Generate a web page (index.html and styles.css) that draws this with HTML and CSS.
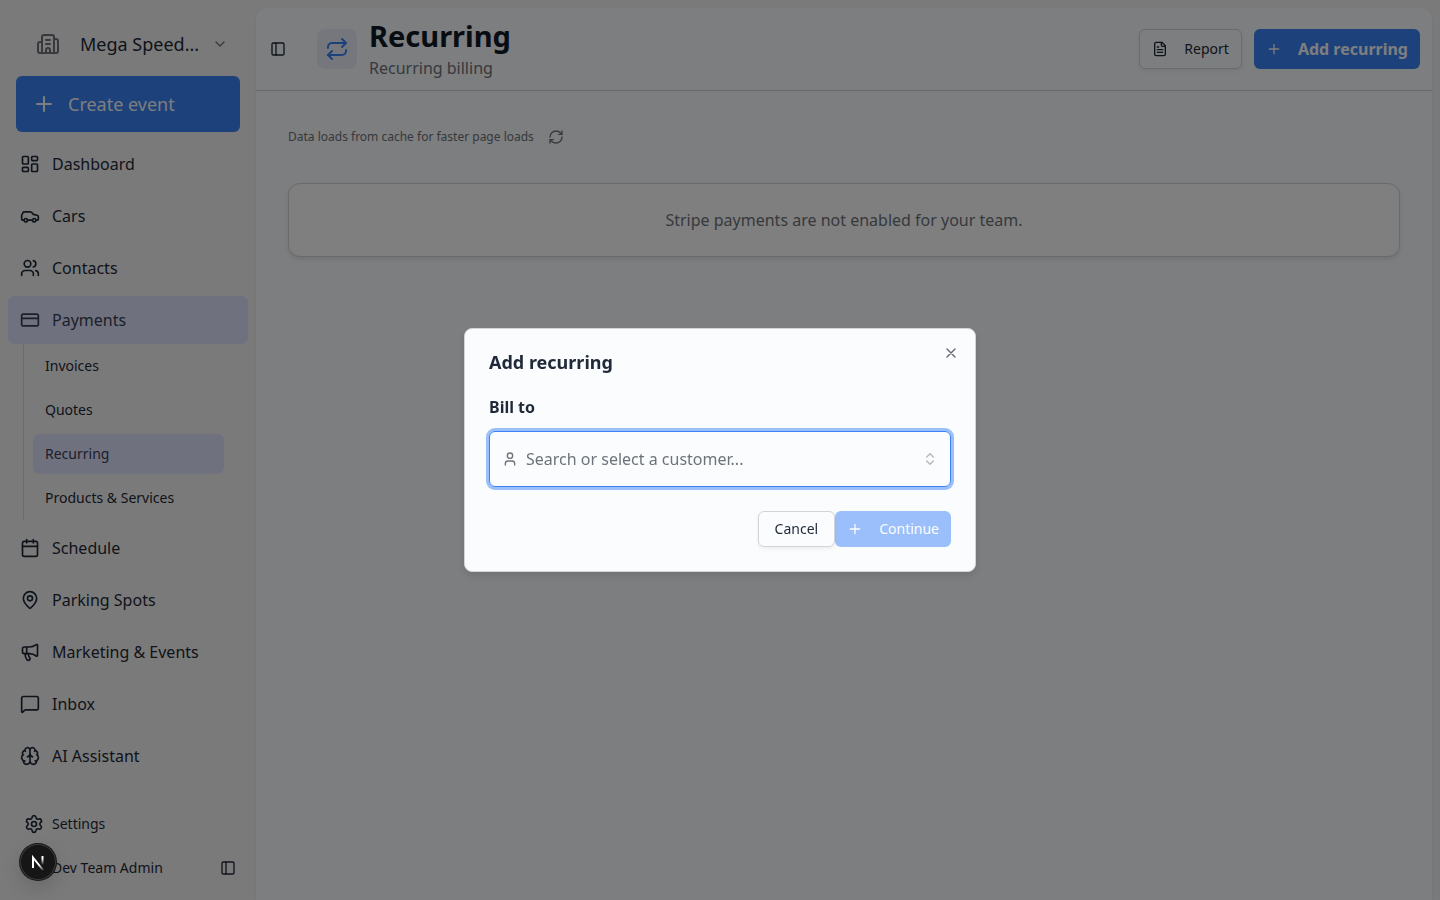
FILE: index.html
```html
<!DOCTYPE html>
<html lang="en">
<head>
<meta charset="utf-8">
<meta name="viewport" content="width=device-width, initial-scale=1">
<title>Recurring</title>
<link rel="stylesheet" href="styles.css">
</head>
<body>
<svg class="sprite" aria-hidden="true">
  <symbol id="i-building" viewBox="0 0 24 24"><path d="M10 12h4M10 8h4M14 21v-3a2 2 0 0 0-4 0v3M6 10H4a2 2 0 0 0-2 2v7a2 2 0 0 0 2 2h16a2 2 0 0 0 2-2V9a2 2 0 0 0-2-2h-2M6 21V5a2 2 0 0 1 2-2h8a2 2 0 0 1 2 2v16"/></symbol>
  <symbol id="i-chevron" viewBox="0 0 24 24"><path d="m6 9 6 6 6-6"/></symbol>
  <symbol id="i-plus" viewBox="0 0 24 24"><path d="M5 12h14M12 5v14"/></symbol>
  <symbol id="i-dashboard" viewBox="0 0 24 24"><rect width="7" height="9" x="3" y="3" rx="1"/><rect width="7" height="5" x="14" y="3" rx="1"/><rect width="7" height="9" x="14" y="12" rx="1"/><rect width="7" height="5" x="3" y="16" rx="1"/></symbol>
  <symbol id="i-car" viewBox="0 0 24 24"><path d="M19 17h2c.6 0 1-.4 1-1v-3c0-.9-.7-1.7-1.5-1.9C18.7 10.6 16 10 16 10s-1.3-1.4-2.2-2.3c-.5-.4-1.1-.7-1.8-.7H5c-.6 0-1.1.4-1.4.9l-1.4 2.9A3.7 3.7 0 0 0 2 12v4c0 .6.4 1 1 1h2"/><circle cx="7" cy="17" r="2"/><path d="M9 17h6"/><circle cx="17" cy="17" r="2"/></symbol>
  <symbol id="i-users" viewBox="0 0 24 24"><path d="M16 21v-2a4 4 0 0 0-4-4H6a4 4 0 0 0-4 4v2"/><circle cx="9" cy="7" r="4"/><path d="M22 21v-2a4 4 0 0 0-3-3.87M16 3.13a4 4 0 0 1 0 7.75"/></symbol>
  <symbol id="i-card" viewBox="0 0 24 24"><rect width="20" height="14" x="2" y="5" rx="2"/><path d="M2 10h20"/></symbol>
  <symbol id="i-calendar" viewBox="0 0 24 24"><path d="M8 2v4M16 2v4M3 10h18"/><rect width="18" height="18" x="3" y="4" rx="2"/></symbol>
  <symbol id="i-pin" viewBox="0 0 24 24"><path d="M20 10c0 4.993-5.539 10.193-7.399 11.799a1 1 0 0 1-1.202 0C9.539 20.193 4 14.993 4 10a8 8 0 0 1 16 0"/><circle cx="12" cy="10" r="3"/></symbol>
  <symbol id="i-megaphone" viewBox="0 0 24 24"><path d="M11 6a13 13 0 0 0 8.4-2.8A1 1 0 0 1 21 4v12a1 1 0 0 1-1.6.8A13 13 0 0 0 11 14H5a2 2 0 0 1-2-2V8a2 2 0 0 1 2-2z"/><path d="M6 14a12 12 0 0 0 2.4 7.2 2 2 0 0 0 3.2-2.4A8 8 0 0 1 10 14M8 6v8"/></symbol>
  <symbol id="i-message" viewBox="0 0 24 24"><path d="M22 17a2 2 0 0 1-2 2H6.828a2 2 0 0 0-1.414.586l-2.202 2.202A.71.71 0 0 1 2 21.286V5a2 2 0 0 1 2-2h16a2 2 0 0 1 2 2z"/></symbol>
  <symbol id="i-brain" viewBox="0 0 24 24"><path d="M12 18V5M15 13a4.17 4.17 0 0 1-3-4 4.17 4.17 0 0 1-3 4M17.598 6.5A3 3 0 1 0 12 5a3 3 0 1 0-5.598 1.5M17.997 5.125a4 4 0 0 1 2.526 5.77M18 18a4 4 0 0 0 2-7.464M19.967 17.483A4 4 0 1 1 12 18a4 4 0 1 1-7.967-.517M6 18a4 4 0 0 1-2-7.464M6.003 5.125a4 4 0 0 0-2.526 5.77"/></symbol>
  <symbol id="i-settings" viewBox="0 0 24 24"><path d="M9.671 4.136a2.34 2.34 0 0 1 4.659 0 2.34 2.34 0 0 0 3.319 1.915 2.34 2.34 0 0 1 2.33 4.033 2.34 2.34 0 0 0 0 3.831 2.34 2.34 0 0 1-2.33 4.033 2.34 2.34 0 0 0-3.319 1.915 2.34 2.34 0 0 1-4.659 0 2.34 2.34 0 0 0-3.32-1.915 2.34 2.34 0 0 1-2.33-4.033 2.34 2.34 0 0 0 0-3.831A2.34 2.34 0 0 1 6.35 6.051a2.34 2.34 0 0 0 3.319-1.915"/><circle cx="12" cy="12" r="3"/></symbol>
  <symbol id="i-panel" viewBox="0 0 24 24"><rect width="18" height="18" x="3" y="3" rx="2"/><path d="M9 3v18"/></symbol>
  <symbol id="i-repeat" viewBox="0 0 24 24"><path d="m17 2 4 4-4 4"/><path d="M3 11v-1a4 4 0 0 1 4-4h14M7 22l-4-4 4-4"/><path d="M21 13v1a4 4 0 0 1-4 4H3"/></symbol>
  <symbol id="i-file" viewBox="0 0 24 24"><path d="M15 2H6a2 2 0 0 0-2 2v16a2 2 0 0 0 2 2h12a2 2 0 0 0 2-2V7Z"/><path d="M14 2v4a2 2 0 0 0 2 2h4M10 9H8M16 13H8M16 17H8"/></symbol>
  <symbol id="i-refresh" viewBox="0 0 24 24"><path d="M3 12a9 9 0 0 1 9-9 9.75 9.75 0 0 1 6.74 2.74L21 8"/><path d="M21 3v5h-5M21 12a9 9 0 0 1-9 9 9.75 9.75 0 0 1-6.74-2.74L3 16"/><path d="M8 16H3v5"/></symbol>
  <symbol id="i-user" viewBox="0 0 24 24"><path d="M19 21v-2a4 4 0 0 0-4-4H9a4 4 0 0 0-4 4v2"/><circle cx="12" cy="7" r="4"/></symbol>
  <symbol id="i-updown" viewBox="0 0 24 24"><path d="m7 15 5 5 5-5M7 9l5-5 5 5"/></symbol>
  <symbol id="i-close" viewBox="0 0 24 24"><path d="M18 6 6 18M6 6l12 12"/></symbol>
</svg>

<div class="app">
  <aside class="sidebar">
    <div class="sidebar-top">
      <button class="team" type="button">
        <svg class="icon icon-lg muted"><use href="#i-building"/></svg>
        <span class="team-name">Mega Speed...</span>
        <svg class="icon icon-sm muted"><use href="#i-chevron"/></svg>
      </button>
      <button class="create" type="button"><svg class="icon icon-lg"><use href="#i-plus"/></svg>Create event</button>
    </div>
    <nav class="nav" aria-label="Main">
      <a class="nav-item" href="#"><svg class="icon"><use href="#i-dashboard"/></svg>Dashboard</a>
      <a class="nav-item" href="#"><svg class="icon"><use href="#i-car"/></svg>Cars</a>
      <a class="nav-item" href="#"><svg class="icon"><use href="#i-users"/></svg>Contacts</a>
      <div class="nav-group">
        <a class="nav-item active" href="#"><svg class="icon"><use href="#i-card"/></svg>Payments</a>
        <div class="subnav">
          <a class="sub-item" href="#">Invoices</a>
          <a class="sub-item" href="#">Quotes</a>
          <a class="sub-item active" href="#" aria-current="page">Recurring</a>
          <a class="sub-item" href="#">Products &amp; Services</a>
        </div>
      </div>
      <a class="nav-item" href="#"><svg class="icon"><use href="#i-calendar"/></svg>Schedule</a>
      <a class="nav-item" href="#"><svg class="icon"><use href="#i-pin"/></svg>Parking Spots</a>
      <a class="nav-item" href="#"><svg class="icon"><use href="#i-megaphone"/></svg>Marketing &amp; Events</a>
      <a class="nav-item" href="#"><svg class="icon"><use href="#i-message"/></svg>Inbox</a>
      <a class="nav-item" href="#"><svg class="icon"><use href="#i-brain"/></svg>AI Assistant</a>
    </nav>
    <div class="sidebar-foot">
      <a class="foot-item" href="#"><svg class="icon"><use href="#i-settings"/></svg>Settings</a>
      <div class="foot-item user-row">
        <span class="user-name">Dev Team Admin</span>
        <button class="icon-button" type="button" aria-label="Collapse sidebar"><svg class="icon icon-sm"><use href="#i-panel"/></svg></button>
      </div>
    </div>
  </aside>

  <main class="main">
    <header class="page-head">
      <button class="icon-button" type="button" aria-label="Toggle sidebar"><svg class="icon icon-sm"><use href="#i-panel"/></svg></button>
      <div class="page-title">
        <span class="tile"><svg class="icon icon-lg"><use href="#i-repeat"/></svg></span>
        <div class="title-text">
          <h1>Recurring</h1>
          <p class="subtitle">Recurring billing</p>
        </div>
      </div>
      <div class="actions">
        <button class="btn btn-outline" type="button"><svg class="icon icon-sm"><use href="#i-file"/></svg>Report</button>
        <button class="btn btn-primary btn-strong" type="button"><svg class="icon icon-sm"><use href="#i-plus"/></svg>Add recurring</button>
      </div>
    </header>
    <div class="content">
      <div class="cache">
        <span>Data loads from cache for faster page loads</span>
        <button class="icon-button" type="button" aria-label="Refresh"><svg class="icon icon-sm"><use href="#i-refresh"/></svg></button>
      </div>
      <section class="card">Stripe payments are not enabled for your team.</section>
    </div>
  </main>
</div>

<div class="overlay">
  <div class="dialog" role="dialog" aria-modal="true" aria-labelledby="dialog-title">
    <button class="icon-button close" type="button" aria-label="Close"><svg class="icon icon-sm"><use href="#i-close"/></svg></button>
    <h2 id="dialog-title">Add recurring</h2>
    <div class="field">
      <label for="customer">Bill to</label>
      <button class="combo" id="customer" type="button" role="combobox" aria-expanded="false">
        <svg class="icon icon-sm"><use href="#i-user"/></svg>
        <span class="combo-text">Search or select a customer...</span>
        <svg class="icon icon-sm faint"><use href="#i-updown"/></svg>
      </button>
    </div>
    <div class="dialog-actions">
      <button class="btn btn-outline btn-cancel" type="button">Cancel</button>
      <button class="btn btn-primary" type="button" disabled><svg class="icon icon-sm"><use href="#i-plus"/></svg>Continue</button>
    </div>
  </div>
</div>

<button class="dev-badge" type="button" aria-label="Open developer tools">
  <svg viewBox="0 0 36 36" fill="none" stroke-width="2">
    <defs>
      <linearGradient id="fade-a" gradientUnits="userSpaceOnUse" x1="13" y1="13" x2="23" y2="26"><stop offset=".6" stop-color="#fff"/><stop offset="1" stop-color="#fff" stop-opacity="0.2"/></linearGradient>
      <linearGradient id="fade-b" gradientUnits="userSpaceOnUse" x1="23" y1="12" x2="23" y2="21"><stop offset=".3" stop-color="#fff"/><stop offset="1" stop-color="#fff" stop-opacity="0"/></linearGradient>
    </defs>
    <path d="M13 24V13.500L23 26" stroke="url(#fade-a)"/>
    <path d="M22.500 12v9" stroke="url(#fade-b)"/>
  </svg>
</button>
</body>
</html>
```
FILE: styles.css
```css
:root {
  --ink: #1f2937;
  --muted: #6e737a;
  --line: #d1d5db;
  --blue: #3b82f6;
  --accent: #e0e2ff;
  --surface: #fafcfe;
  --page: #f5f5f5;
}

* { box-sizing: border-box; }

body {
  margin: 0;
  background: var(--page);
  color: var(--ink);
  font-family: "Noto Sans", sans-serif;
  font-size: 16px;
  line-height: 24px;
}

h1, h2, p { margin: 0; }
a { color: inherit; text-decoration: none; }
button { font: inherit; color: inherit; border: 0; background: none; padding: 0; cursor: pointer; }

.sprite { position: absolute; width: 0; height: 0; }

.icon {
  width: 20px;
  height: 20px;
  flex: none;
  fill: none;
  stroke: currentColor;
  stroke-width: 2;
  stroke-linecap: round;
  stroke-linejoin: round;
}
.icon-sm { width: 16px; height: 16px; }
.icon-lg { width: 24px; height: 24px; }
.muted { color: var(--muted); }
.faint { opacity: .5; }
.icon-button { display: flex; flex: none; }

.app { display: flex; min-height: 100vh; }

/* Sidebar */
.sidebar {
  display: flex;
  flex-direction: column;
  width: 256px;
  flex: none;
  padding: 20px 0 12px;
}
.sidebar-top { display: flex; flex-direction: column; gap: 8px; padding: 0 16px 8px; }
.team {
  display: flex;
  align-items: center;
  height: 48px;
  padding: 0 12px 0 20px;
  font-size: 18px;
  text-align: left;
}
.team-name { flex: 1; padding-left: 20px; white-space: nowrap; }
.create {
  display: flex;
  align-items: center;
  gap: 12px;
  height: 56px;
  padding: 0 16px;
  border-radius: 6px;
  background: var(--blue);
  color: var(--surface);
  font-size: 18px;
}
.nav { display: flex; flex-direction: column; gap: 4px; padding: 0 8px; }
.nav-item {
  display: flex;
  align-items: center;
  gap: 12px;
  height: 48px;
  padding: 0 12px;
  border-radius: 6px;
}
.active { background: var(--accent); color: #374151; }
.subnav {
  display: flex;
  flex-direction: column;
  gap: 4px;
  margin: 0 24px 0 15px;
  padding: 2px 0 2px 9px;
  border-left: 1px solid var(--line);
}
.sub-item {
  display: flex;
  align-items: center;
  height: 40px;
  padding: 0 12px;
  border-radius: 6px;
  font-size: 14px;
}
.sidebar-foot { display: flex; flex-direction: column; gap: 4px; margin-top: auto; padding: 0 20px 0 24px; }
.foot-item { display: flex; align-items: center; gap: 8px; height: 40px; font-size: 14px; }
.user-row { justify-content: space-between; padding-left: 28px; }

/* Main panel */
.main {
  flex: 1;
  min-width: 0;
  margin: 8px 8px 0 0;
  border-radius: 12px 12px 0 0;
  background: var(--surface);
  box-shadow: 0 1px 4px rgba(0, 0, 0, .06);
}
.page-head {
  display: flex;
  align-items: center;
  padding: 8px 12px 8px 14px;
  border-bottom: 1px solid var(--line);
}
.page-title { display: flex; align-items: center; gap: 12px; flex: 1; padding-left: 31px; }
.title-text { padding-bottom: 2px; }
.tile {
  display: flex;
  align-items: center;
  justify-content: center;
  width: 40px;
  height: 40px;
  border-radius: 8px;
  background: #edeffa;
  color: var(--blue);
}
h1 { font-size: 29px; line-height: 40px; font-weight: 700; color: #111827; }
.subtitle { line-height: 24px; color: var(--muted); }
.actions { display: flex; gap: 12px; }

.btn {
  display: flex;
  align-items: center;
  gap: 16px;
  height: 40px;
  padding: 0 12px;
  border-radius: 6px;
  font-size: 14px;
  white-space: nowrap;
}
.btn-outline {
  border: 1px solid var(--line);
  background: var(--surface);
  box-shadow: 0 2px 4px rgba(0, 0, 0, .06);
}
.btn-primary { background: var(--blue); color: var(--surface); }
.btn-strong { font-size: 16px; font-weight: 700; }

.content { display: flex; flex-direction: column; gap: 32px; padding: 32px; }
.cache {
  display: flex;
  align-items: center;
  gap: 14px;
  height: 28px;
  font-size: 12px;
  color: var(--muted);
}
.card {
  padding: 24px;
  border: 1px solid var(--line);
  border-radius: 12px;
  background: #fff;
  box-shadow: 0 2px 4px rgba(0, 0, 0, .1);
  color: var(--muted);
  text-align: center;
}

/* Dialog */
.overlay {
  position: fixed;
  inset: 0;
  display: flex;
  align-items: center;
  justify-content: center;
  background: rgba(0, 0, 0, .5);
}
.dialog {
  position: relative;
  display: flex;
  flex-direction: column;
  gap: 24px;
  width: 100%;
  max-width: 512px;
  padding: 24px;
  border: 1px solid var(--line);
  border-radius: 8px;
  background: var(--surface);
  box-shadow: 0 4px 8px rgba(0, 0, 0, .1);
}
.close { position: absolute; top: 16px; right: 16px; opacity: .7; }
h2 { font-size: 18px; line-height: 18px; font-weight: 700; }
.field { display: flex; flex-direction: column; gap: 12px; }
label { font-weight: 700; }
.combo {
  display: flex;
  align-items: center;
  gap: 8px;
  height: 56px;
  padding: 0 12px;
  border: 1px solid var(--blue);
  border-radius: 6px;
  box-shadow: 0 0 0 3px rgba(59, 130, 246, .5);
  color: var(--muted);
  text-align: left;
}
.combo-text { flex: 1; }
.dialog-actions { display: flex; justify-content: flex-end; }
.dialog-actions .btn { height: 36px; }
.btn-cancel { padding: 0 16px; }
.btn:disabled { opacity: .5; }

.dev-badge {
  position: fixed;
  left: 20px;
  bottom: 20px;
  width: 36px;
  height: 36px;
  border-radius: 50%;
  background: #161616;
  box-shadow: inset 0 0 0 1px #3a3a3a, 0 0 0 1px #171717, 0 8px 20px rgba(0, 0, 0, .14);
}
.dev-badge svg { display: block; width: 36px; height: 36px; }
```
